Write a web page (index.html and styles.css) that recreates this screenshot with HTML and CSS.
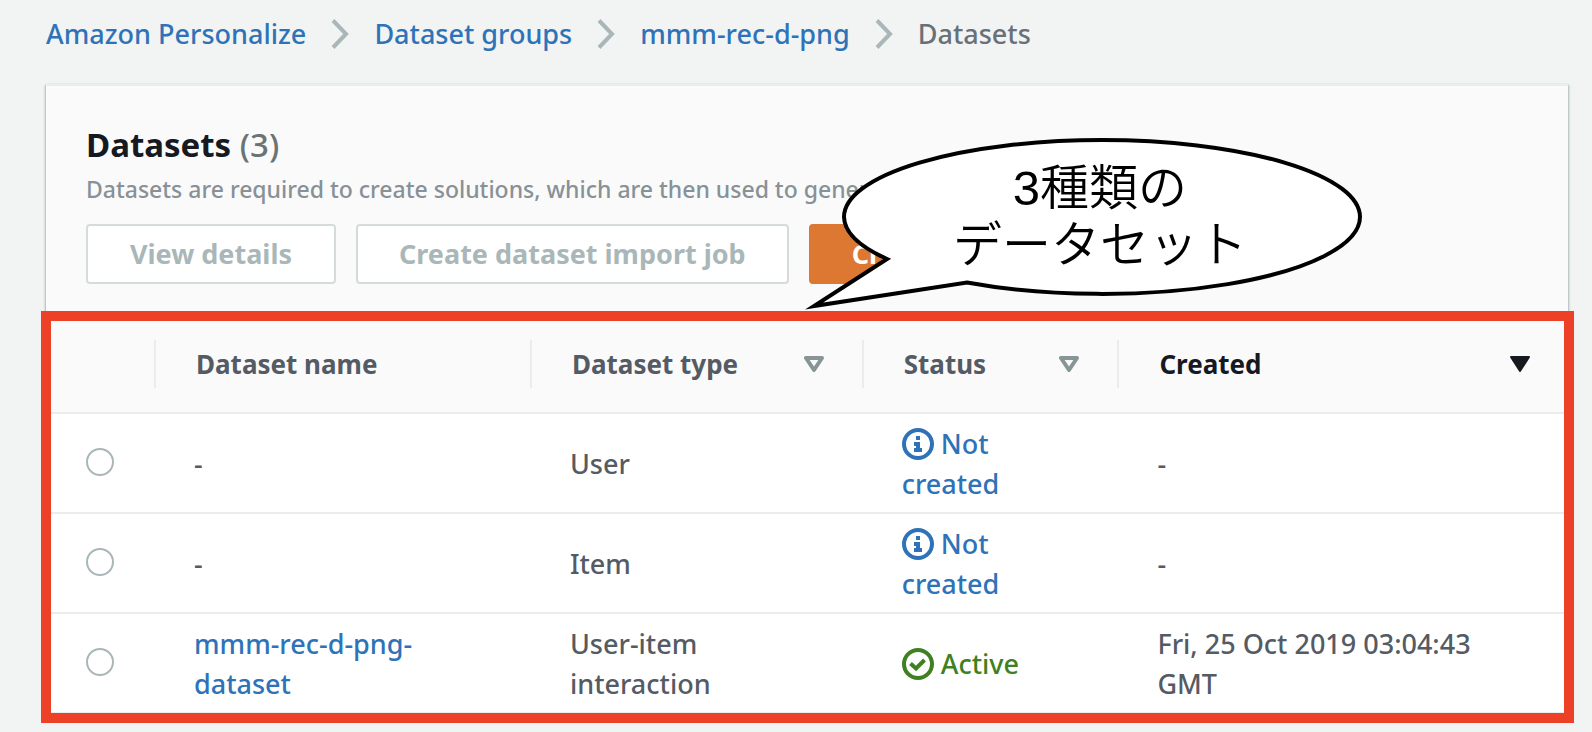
FILE: index.html
```html
<!DOCTYPE html>
<html lang="en">
<head>
<meta charset="utf-8">
<meta name="viewport" content="width=device-width, initial-scale=1">
<title>Datasets - Amazon Personalize</title>
<link rel="stylesheet" href="styles.css">
</head>
<body>
<svg class="sprite" aria-hidden="true">
  <symbol id="chevron" viewBox="0 0 18 32"><path d="M2 2.500 15 16 2 29.500" fill="none" stroke="currentColor" stroke-width="4"/></symbol>
  <symbol id="sort" viewBox="0 0 20 16"><path d="M2 2H18L10 14Z" fill="none" stroke="currentColor" stroke-width="4" stroke-linejoin="round"/></symbol>
  <symbol id="sorted" viewBox="0 0 20 16"><path d="M1 1H19L10 15Z" fill="currentColor" stroke="currentColor" stroke-width="2" stroke-linejoin="round"/></symbol>
  <symbol id="info" viewBox="0 0 32 32"><circle cx="16" cy="16" r="14" fill="none" stroke="currentColor" stroke-width="4"/><path d="M14 8h4v4h-4zM12 14h6v6h2v4h-8v-4h2v-2h-2z" fill="currentColor"/></symbol>
  <symbol id="check" viewBox="0 0 32 32"><circle cx="16" cy="16" r="14" fill="none" stroke="currentColor" stroke-width="4"/><path d="M8.500 15.500 14 20.500 22.500 12" fill="none" stroke="currentColor" stroke-width="4"/></symbol>
</svg>

<nav class="breadcrumbs" aria-label="Breadcrumbs">
  <a href="#">Amazon Personalize</a>
  <svg class="chevron" aria-hidden="true"><use href="#chevron"/></svg>
  <a href="#">Dataset groups</a>
  <svg class="chevron" aria-hidden="true"><use href="#chevron"/></svg>
  <a href="#">mmm-rec-d-png</a>
  <svg class="chevron" aria-hidden="true"><use href="#chevron"/></svg>
  <span aria-current="page">Datasets</span>
</nav>

<main class="panel">
  <header class="panel-header">
    <h1 class="title">Datasets <span class="count">(3)</span></h1>
    <p class="description">Datasets are required to create solutions, which are then used to generate</p>
    <div class="actions">
      <button class="button" type="button" disabled>View details</button>
      <button class="button" type="button" disabled>Create dataset import job</button>
      <button class="button primary" type="button">Create dataset</button>
    </div>
  </header>

  <div class="highlight">
    <table class="datasets">
      <colgroup><col class="col-select"><col class="col-name"><col class="col-type"><col class="col-status"><col></colgroup>
      <thead>
        <tr>
          <th aria-label="Select"><div class="head"></div></th>
          <th><div class="head">Dataset name</div></th>
          <th><div class="head">Dataset type<svg class="sort" aria-hidden="true"><use href="#sort"/></svg></div></th>
          <th><div class="head">Status<svg class="sort" aria-hidden="true"><use href="#sort"/></svg></div></th>
          <th class="active-sort" aria-sort="descending"><div class="head">Created<svg class="sort" aria-hidden="true"><use href="#sorted"/></svg></div></th>
        </tr>
      </thead>
      <tbody>
        <tr>
          <td><input class="radio" type="radio" name="dataset" aria-label="User dataset"></td>
          <td>-</td>
          <td>User</td>
          <td><span class="info"><svg class="status-icon" aria-hidden="true"><use href="#info"/></svg>Not created</span></td>
          <td>-</td>
        </tr>
        <tr>
          <td><input class="radio" type="radio" name="dataset" aria-label="Item dataset"></td>
          <td>-</td>
          <td>Item</td>
          <td><span class="info"><svg class="status-icon" aria-hidden="true"><use href="#info"/></svg>Not created</span></td>
          <td>-</td>
        </tr>
        <tr>
          <td><input class="radio" type="radio" name="dataset" aria-label="User-item interaction dataset"></td>
          <td><a href="#">mmm-rec-d-png-<wbr>dataset</a></td>
          <td>User-item interaction</td>
          <td><span class="success"><svg class="status-icon" aria-hidden="true"><use href="#check"/></svg>Active</span></td>
          <td>Fri, 25 Oct 2019 03:04:43 GMT</td>
        </tr>
      </tbody>
    </table>
  </div>

  <aside class="callout" lang="ja">
    <svg class="bubble" viewBox="800 134 564 180" aria-hidden="true"><path d="M887 259A258 77 0 0 1 844 217A258 77 0 0 1 1360 217A258 77 0 0 1 967 282.500L814 306Z" fill="#fff" stroke="#000" stroke-width="4" stroke-miterlimit="10"/></svg>
    <p class="callout-text">3種類の<br>データセット</p>
  </aside>
</main>
</body>
</html>
```
FILE: styles.css
```css
* {
  box-sizing: border-box;
}

body {
  margin: 0;
  padding: 14px 24px 18px 46px;
  background: #f2f4f3;
  color: #545b64;
  font-family: "Noto Sans", "Noto Sans CJK JP", sans-serif;
  font-size: 27px;
  font-weight: 500;
  line-height: 40px;
}

a {
  color: #2e73b8;
  text-decoration: none;
}

.sprite {
  position: absolute;
  width: 0;
  height: 0;
}

.breadcrumbs {
  display: flex;
  align-items: center;
  gap: 25px;
  margin-bottom: 30px;
  color: #687078;
  white-space: nowrap;
}

.chevron {
  flex: none;
  width: 18px;
  height: 32px;
  color: #aab7b8;
}

.panel {
  position: relative;
  border-top: 2px solid #eaeded;
  background: #fafafa;
  box-shadow: -1px 1px 2px #aab7b8, 1px 1px 2px #aab7b8;
}

.panel-header {
  padding: 37px 40px 32px;
}

.title {
  margin: 0;
  color: #16191f;
  font-size: 33px;
  line-height: 44px;
}

.count {
  color: #6a7474;
  font-weight: 500;
}

.description {
  margin: 0 0 13px;
  color: #879196;
  font-size: 23px;
  line-height: 44px;
}

.actions {
  display: flex;
  gap: 20px;
}

.button {
  min-width: 250px;
  padding: 8px 41px;
  border: 2px solid #d5dbdb;
  border-radius: 4px;
  background: #fff;
  color: #aab7b8;
  font: inherit;
  font-weight: 700;
  white-space: nowrap;
}

.primary {
  border-color: #dd7833;
  background: #dd7833;
  color: #fff;
}

.highlight {
  position: relative;
}

.highlight::after {
  position: absolute;
  inset: -5px -6px -9px -5px;
  border: 10px solid #ec4126;
  content: "";
  pointer-events: none;
}

.datasets {
  width: 100%;
  border-collapse: separate;
  border-spacing: 0;
  table-layout: fixed;
}

.col-select {
  width: 110px;
}

.col-name {
  width: 24.7%;
}

.col-type {
  width: 21.8%;
}

.col-status {
  width: 16.8%;
}

th {
  padding: 24px 0;
  border-bottom: 2px solid #eaeded;
  font-size: 26px;
  text-align: left;
}

.head {
  display: flex;
  align-items: center;
  justify-content: space-between;
  height: 48px;
  padding: 0 38px 0 40px;
  border-right: 2px solid #eaeded;
}

th:last-child .head {
  border-right: 0;
}

.active-sort {
  color: #16191f;
}

.sort {
  flex: none;
  width: 20px;
  height: 16px;
  color: #879596;
}

.active-sort .sort {
  color: #16191f;
}

td {
  padding: 10px 60px 8px 38px;
  border-bottom: 2px solid #eaeded;
  background: #fff;
}

td:first-child {
  padding: 8px 0 10px 40px;
}

.radio {
  display: block;
  width: 28px;
  height: 28px;
  margin: 0;
  border: 2px solid #aab7b8;
  border-radius: 50%;
  background: #fff;
  appearance: none;
}

.info {
  color: #2e73b8;
}

.success {
  color: #3f8021;
}

.status-icon {
  width: 32px;
  height: 32px;
  margin-right: 7px;
  vertical-align: -6px;
}

.callout {
  position: absolute;
  top: 48px;
  left: 754px;
  width: 564px;
}

.bubble {
  display: block;
  width: 100%;
}

.callout-text {
  position: absolute;
  inset: 26px 0 auto 36px;
  margin: 0;
  color: #000;
  font-family: "Liberation Sans", "Noto Sans CJK JP", sans-serif;
  font-size: 49px;
  font-weight: 350;
  line-height: 57px;
  text-align: center;
}
```
